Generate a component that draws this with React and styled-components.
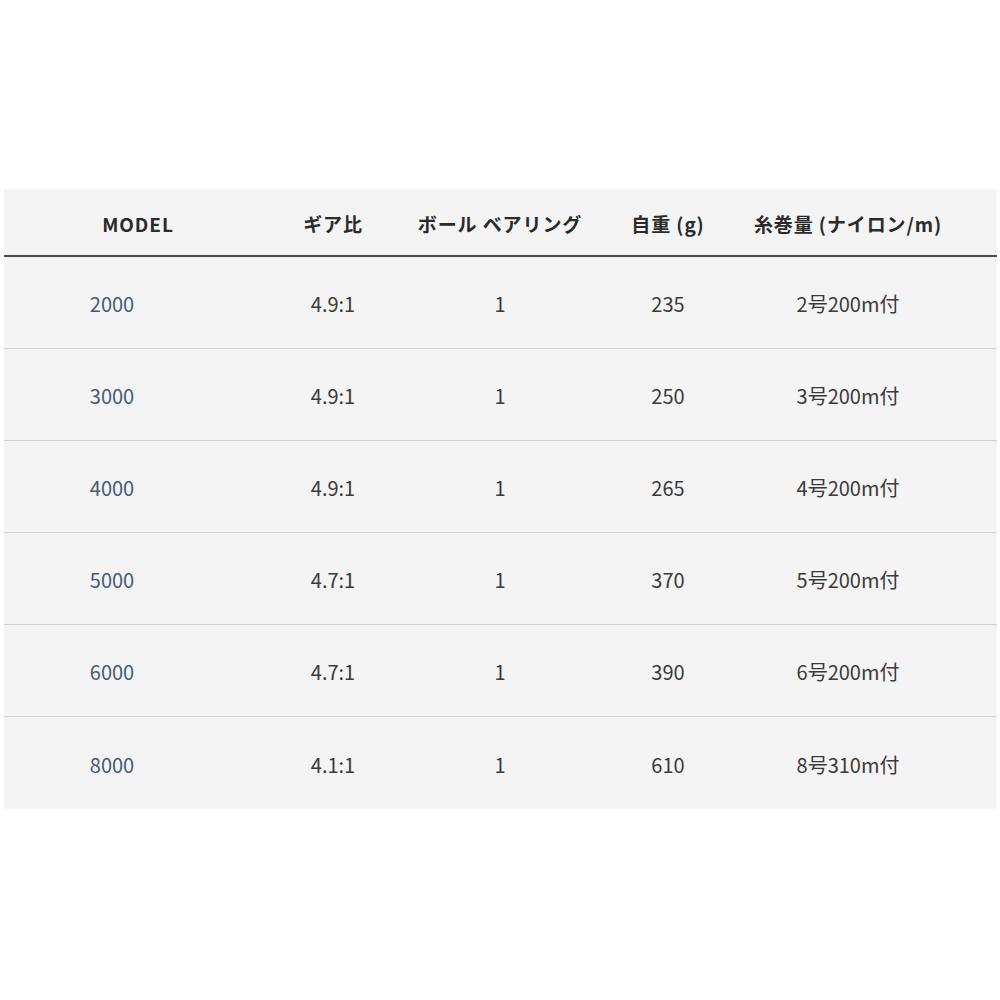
import React from "react";
import styled, { createGlobalStyle } from "styled-components";

const rows = [
  { model: "2000", gear: "4.9:1", bearing: "1", weight: "235", line: "2号200m付" },
  { model: "3000", gear: "4.9:1", bearing: "1", weight: "250", line: "3号200m付" },
  { model: "4000", gear: "4.9:1", bearing: "1", weight: "265", line: "4号200m付" },
  { model: "5000", gear: "4.7:1", bearing: "1", weight: "370", line: "5号200m付" },
  { model: "6000", gear: "4.7:1", bearing: "1", weight: "390", line: "6号200m付" },
  { model: "8000", gear: "4.1:1", bearing: "1", weight: "610", line: "8号310m付" },
];

const App = () => {
  return (
    <Page>
      <GlobalStyle />
      <Table>
        <HeadRow>
          <HeadCell>MODEL</HeadCell>
          <HeadCell>ギア比</HeadCell>
          <HeadCell>ボール ベアリング</HeadCell>
          <HeadCell>自重 (g)</HeadCell>
          <HeadCell>糸巻量 (ナイロン/m)</HeadCell>
        </HeadRow>
        {rows.map((item, i) => {
          return (
            <Row key={item.model} last={i === rows.length - 1}>
              <ModelCell>{item.model}</ModelCell>
              <Cell>{item.gear}</Cell>
              <Cell>{item.bearing}</Cell>
              <Cell>{item.weight}</Cell>
              <Cell>{item.line}</Cell>
            </Row>
          );
        })}
      </Table>
    </Page>
  );
};

export default App;

const GlobalStyle = createGlobalStyle`
  html, body {
    margin: 0;
    padding: 0;
    background: #ffffff;
  }
  body {
    font-family: "Noto Sans CJK JP", "Noto Sans", sans-serif;
    color: #333333;
  }
`;

const Page = styled.div`
  width: 1000px;
  height: 1000px;
  padding: 189px 3px 0 4px;
  box-sizing: border-box;
`;

const Table = styled.div`
  background: #f4f4f4;
  display: flex;
  flex-direction: column;
`;

const cols = "268px 122px 212px 124px 236px 31px";

const HeadRow = styled.div`
  display: grid;
  grid-template-columns: ${cols};
  height: 66px;
  align-items: center;
  border-bottom: 2px solid #4a4a4a;
`;

const HeadCell = styled.div`
  text-align: center;
  font-size: 19px;
  font-weight: 700;
  letter-spacing: 0.9px;
  color: #2b2b2b;
  padding-top: 2px;
`;

const Row = styled.div`
  display: grid;
  grid-template-columns: ${cols};
  height: ${(p) => (p.last ? "92px" : "91px")};
  align-items: center;
  border-bottom: ${(p) => (p.last ? "none" : "1px solid #cfcfcf")};
`;

const Cell = styled.div`
  text-align: center;
  font-size: 20px;
  color: #3a3a3a;
  padding-top: 2px;
`;

const ModelCell = styled(Cell)`
  color: #45597a;
  padding-right: 52px;
`;
